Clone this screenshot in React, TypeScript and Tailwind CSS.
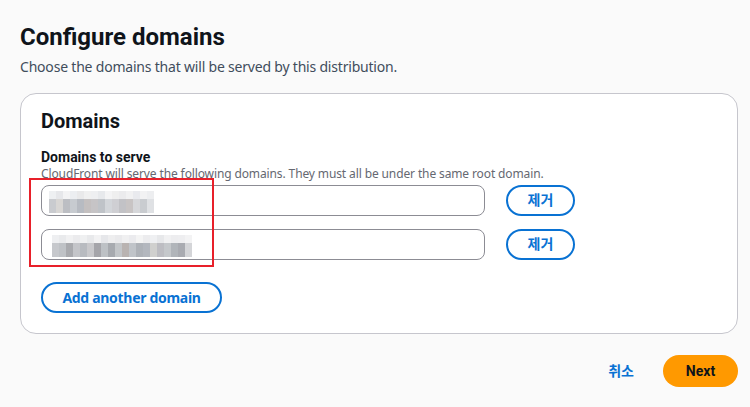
import React from "react";

const FONT = {
  fontFamily: 'Roboto, "Noto Sans", "Noto Sans CJK KR", sans-serif',
};
const BODY = {
  fontFamily: '"Noto Sans", Roboto, "Noto Sans CJK KR", sans-serif',
};

// blurred placeholder text (pixelated mosaic)
const MOSAIC_A = [
  ["#eef0f2", "#e6e7ea", "#f3f3f4", "#eceef1", "#e9e9ea", "#f0f0f0", "#eeeff1", "#e7e9ec", "#f4f4f5", "#efefef", "#ebebed", "#f1f1f2", "#e9eaee", "#f2f2f3", "#edeef0"],
  ["#c9cbcf", "#d8d6d4", "#bcbec3", "#c7cbd0", "#b7bbc2", "#c4c0c0", "#c6c4c6", "#bfc3c8", "#d3d6da", "#cfcfd3", "#c2c2c6", "#c8c4c4", "#d6d7da", "#c9ccd0", "#dfe1e4"],
];
const MOSAIC_B = [
  ["#eeeff1", "#e9eaec", "#f1f1f2", "#ebebed", "#eff0f1", "#e8e9eb", "#f2f2f3", "#e6e7ea", "#eeeeef", "#eaeaec", "#f0f0f1", "#ebebee", "#f4f4f4", "#ececee", "#eff0f2", "#e7e8ea", "#f1f1f2", "#ededef", "#eeeef0", "#f3f3f4"],
  ["#c6c8cc", "#bfc2c6", "#a9aaae", "#c4c5c9", "#b8bbc0", "#c9c9cc", "#a5a5aa", "#bdc1c5", "#a7aaaf", "#c3c6c9", "#b9b3b1", "#c0c4c9", "#aeb2b8", "#b3b7be", "#d0d0ce", "#bdbdc2", "#c5c8cb", "#b1b5ba", "#a9abb1", "#d4d5d8"],
];

function Mosaic({ rows }: { rows: string[][] }) {
  return (
    <div className="flex flex-col">
      {rows.map((row, i) => (
        <div key={i} className={`flex ${i === 0 ? "h-[8px]" : "h-[14px]"}`}>
          {row.map((c, j) => (
            <div key={j} className="w-[7px] h-full" style={{ backgroundColor: c }} />
          ))}
        </div>
      ))}
    </div>
  );
}

function DomainRow({ rows, pad }: { rows: string[][]; pad: string }) {
  return (
    <div className="flex items-center gap-[21px]">
      <div className={`w-[444px] h-[31px] border border-[#8c8c94] rounded-[8px] bg-white flex items-center ${pad}`}>
        <Mosaic rows={rows} />
      </div>
      <button className="w-[69px] h-[31px] rounded-full border-2 border-[#0972d3] text-[#0972d3] text-[14px] font-bold flex items-center justify-center">
        제거
      </button>
    </div>
  );
}

export default function App() {
  return (
    <div className="w-[750px] h-[407px] bg-[#fafafa] text-[#0f141a] overflow-hidden" style={FONT}>
      <div className="pl-[20px] pr-[12px] pt-[21px]">
        {/* HEADER */}
        <h1 className="text-[24px] leading-[32px] font-bold">Configure domains</h1>
        <p className="text-[14px] leading-[20px] text-[#414d5c] mt-[4px] tracking-[-0.2px]" style={BODY}>
          Choose the domains that will be served by this distribution.
        </p>

        {/* PANEL */}
        <div className="mt-[16px] w-[718px] h-[241px] bg-white border border-[#c6c6cd] rounded-[16px] pl-[20px] pt-[15px]">
          <h2 className="text-[20px] leading-[24px] font-bold">Domains</h2>
          <div className="mt-[15px] text-[14px] leading-[18px] font-bold">Domains to serve</div>
          <div className="text-[12px] leading-[16px] text-[#656871] tracking-[-0.12px]" style={BODY}>
            CloudFront will serve the following domains. They must all be under the same root domain.
          </div>

          <div className="relative mt-[3px] flex flex-col gap-[13px]">
            <DomainRow rows={MOSAIC_A} pad="pl-[7px] pt-[2px]" />
            <DomainRow rows={MOSAIC_B} pad="pl-[10px] pt-[2px]" />
            {/* highlight box */}
            <div className="absolute left-[-12px] top-[-7px] w-[185px] h-[89px] border-2 border-[#e8202a] pointer-events-none" />
          </div>

          <button
            className="mt-[22px] w-[181px] h-[31px] rounded-full border-2 border-[#0972d3] text-[#0972d3] text-[14px] font-bold tracking-[-0.3px]"
            style={BODY}
          >
            Add another domain
          </button>
        </div>

        {/* FOOTER */}
        <div className="w-[718px] flex justify-end items-center mt-[21px] gap-[29px]">
          <button className="text-[#0972d3] text-[14px] font-bold">취소</button>
          <button className="w-[75px] h-[32px] rounded-full bg-[#ff9900] text-[#0f141a] text-[14px] font-bold">
            Next
          </button>
        </div>
      </div>
    </div>
  );
}
